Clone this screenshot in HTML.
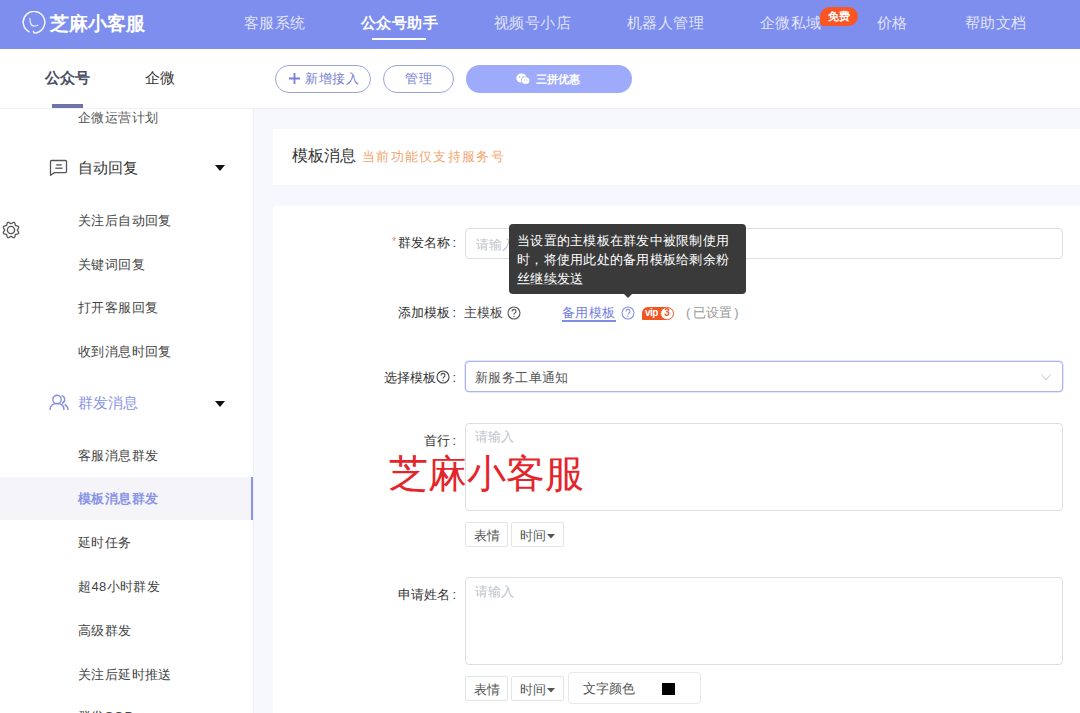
<!DOCTYPE html>
<html><head><meta charset="utf-8">
<style>
*{box-sizing:border-box;margin:0;padding:0}
html,body{width:1080px;height:713px;overflow:hidden;background:#f7f8fd;font-family:"Liberation Sans",sans-serif;color:#333}
.abs{position:absolute;white-space:nowrap}
#hdr{position:absolute;left:0;top:0;width:1080px;height:49px;background:#7e8eee}
.nav{position:absolute;top:14px;font-size:15px;line-height:18px;color:rgba(255,255,255,.78);letter-spacing:.4px}
#sub{position:absolute;left:0;top:49px;width:1080px;height:60px;background:#fff;border-bottom:1px solid #efeff5}
#side{position:absolute;left:0;top:109px;width:253px;height:604px;background:#fff}
.si{position:absolute;left:78px;font-size:13px;line-height:16px;color:#444;letter-spacing:.4px}
.sg{position:absolute;left:78px;font-size:15px;line-height:18px;color:#333}
.card{position:absolute;background:#fff}
.lbl{position:absolute;font-size:13px;line-height:16px;color:#333;text-align:right;right:624px;white-space:nowrap}
.c{font-style:normal;margin-left:2px}
.inp{position:absolute;left:465px;width:598px;border:1px solid #dedede;border-radius:4px;background:#fff}
.ph{position:absolute;font-size:13px;line-height:16px;color:#c0c4cc}
.btn{position:absolute;height:25px;border:1px solid #e4e4e4;border-radius:2px;background:#fff;font-size:13px;line-height:25px;color:#555;text-align:center}
</style></head><body>
<div id="hdr">
  <svg class="abs" style="left:22px;top:11px" width="24" height="24" viewBox="0 0 24 24"><path d="M7.5 21 A10.8 10.8 0 1 1 12.1 22 L11.2 19.8" fill="none" stroke="#fff" stroke-width="1.5" stroke-linejoin="round" opacity=".9"/><path d="M7.9 7 C7.9 12 9 15 12 15 C14 15 15.5 14.6 16.4 14" fill="none" stroke="#fff" stroke-width="1.4" opacity=".75"/></svg>
  <div class="abs" style="left:50px;top:13px;font-size:19px;line-height:22px;font-weight:bold;color:#fff">芝麻小客服</div>
  <div class="nav" style="left:244px">客服系统</div>
  <div class="nav" style="left:361px;font-weight:bold;color:#fff;font-size:15.2px">公众号助手</div>
  <div class="abs" style="left:372px;top:38px;width:54px;height:2px;background:#fff"></div>
  <div class="nav" style="left:494px">视频号小店</div>
  <div class="nav" style="left:627px">机器人管理</div>
  <div class="nav" style="left:760px">企微私域</div>
  <div class="abs" style="left:820px;top:7px;width:38px;height:19px;background:#fa5522;border-radius:9.5px 9.5px 9.5px 4px;color:#fff;font-size:11px;line-height:19px;text-align:center;font-weight:bold">免费</div>
  <div class="nav" style="left:877px">价格</div>
  <div class="nav" style="left:965px">帮助文档</div>
</div>
<div id="sub">
  <div class="abs" style="left:45px;top:20px;font-size:15px;line-height:18px;font-weight:bold;color:#4a4e66">公众号</div>
  <div class="abs" style="left:145px;top:20px;font-size:15px;line-height:18px;color:#333">企微</div>
  <div class="abs" style="left:52px;top:55px;width:31px;height:4px;background:#6e74a8"></div>
  <div class="abs" style="left:275px;top:16px;width:96px;height:28px;border:1px solid #9aa2e2;border-radius:14px;color:#7880d4;font-size:13px;line-height:26px;padding-left:13px;letter-spacing:.6px">
    <svg width="11" height="11" viewBox="0 0 11 11" style="vertical-align:-1px;margin-right:5px"><path d="M5.5 0 V11 M0 5.5 H11" stroke="#7880d4" stroke-width="1.8"/></svg>新增接入</div>
  <div class="abs" style="left:383px;top:16px;width:71px;height:28px;border:1px solid #9aa2e2;border-radius:14px;color:#7880d4;font-size:13px;line-height:26px;text-align:center;letter-spacing:.5px">管理</div>
  <div class="abs" style="left:466px;top:16px;width:166px;height:28px;background:#9eabfa;border-radius:14px;color:#fff;font-size:11px;line-height:28px;padding-left:50px">
    <svg width="14" height="12" viewBox="0 0 14 12" style="vertical-align:-2px"><ellipse cx="5.5" cy="5" rx="5.2" ry="4.5" fill="#fff"/><circle cx="3.6" cy="4" r=".7" fill="#9eabfa"/><circle cx="7" cy="4" r=".7" fill="#9eabfa"/><ellipse cx="9.6" cy="7.6" rx="4.2" ry="3.7" fill="#fff" stroke="#9eabfa" stroke-width=".7"/><circle cx="8.3" cy="7" r=".55" fill="#9eabfa"/><circle cx="11" cy="7" r=".55" fill="#9eabfa"/></svg>&nbsp;&nbsp;<b>三拼优惠</b></div>
</div>

<div id="side">
  <div class="si" style="top:1px;color:#555">企微运营计划</div>
  <svg class="abs" style="left:49px;top:50px" width="20" height="18" viewBox="0 0 20 18"><path d="M2.5 1.5 H16.5 Q17.5 1.5 17.5 2.5 V12.5 Q17.5 13.6 16.5 13.6 H5.5 L1.5 16.3 V2.5 Q1.5 1.5 2.5 1.5 Z" fill="none" stroke="#555" stroke-width="1.3" stroke-linejoin="round"/><path d="M7.2 5.9 H12.7" stroke="#666" stroke-width="1.5"/><path d="M6.3 9.2 H13.5" stroke="#444" stroke-width="1.2"/></svg>
  <div class="sg" style="top:50px">自动回复</div>
  <svg class="abs" style="left:215px;top:56px" width="10" height="6" viewBox="0 0 10 6"><path d="M0 0 H10 L5 6 Z" fill="#111"/></svg>
  <div class="si" style="top:104px">关注后自动回复</div>
  <div class="si" style="top:148px">关键词回复</div>
  <div class="si" style="top:191px">打开客服回复</div>
  <div class="si" style="top:235px">收到消息时回复</div>
  <svg class="abs" style="left:49px;top:285px" width="20" height="17" viewBox="0 0 20 17"><circle cx="8" cy="5.5" r="4.2" fill="none" stroke="#858ee0" stroke-width="1.4"/><path d="M1 16 C1 11.5 4 9.5 8 9.5 C12 9.5 15 11.5 15 16" fill="none" stroke="#858ee0" stroke-width="1.4"/><path d="M12.5 1.6 A4 4 0 0 1 13 9.3 M15.5 10.5 C17.8 11.5 19 13.3 19 16" fill="none" stroke="#858ee0" stroke-width="1.4"/></svg>
  <div class="sg" style="top:285px;color:#8a94e6">群发消息</div>
  <svg class="abs" style="left:215px;top:292px" width="10" height="6" viewBox="0 0 10 6"><path d="M0 0 H10 L5 6 Z" fill="#111"/></svg>
  <div class="si" style="top:339px">客服消息群发</div>
  <div class="abs" style="left:0;top:368px;width:253px;height:43px;background:#f4f4f9;border-right:2px solid #8a94e6"></div>
  <div class="si" style="top:382px;color:#8a94e6;font-weight:bold">模板消息群发</div>
  <div class="si" style="top:426px">延时任务</div>
  <div class="si" style="top:470px">超48小时群发</div>
  <div class="si" style="top:514px">高级群发</div>
  <div class="si" style="top:558px">关注后延时推送</div>
  <div class="si" style="top:600px">群发SOP</div>
</div>
<svg class="abs" style="left:2px;top:221px" width="18" height="18" viewBox="0 0 18 18"><path d="M15.35 9.00 L15.46 9.42 L15.77 9.89 L16.16 10.42 L16.51 11.01 L16.69 11.61 L16.62 12.16 L16.29 12.59 L15.73 12.89 L15.07 13.06 L14.41 13.15 L13.87 13.27 L13.49 13.49 L13.27 13.87 L13.15 14.41 L13.06 15.07 L12.89 15.73 L12.59 16.29 L12.16 16.62 L11.61 16.69 L11.01 16.51 L10.42 16.16 L9.89 15.77 L9.42 15.46 L9.00 15.35 L8.58 15.46 L8.11 15.77 L7.58 16.16 L6.99 16.51 L6.39 16.69 L5.84 16.62 L5.41 16.29 L5.11 15.73 L4.94 15.07 L4.85 14.41 L4.73 13.87 L4.51 13.49 L4.13 13.27 L3.59 13.15 L2.93 13.06 L2.27 12.89 L1.71 12.59 L1.38 12.16 L1.31 11.61 L1.49 11.01 L1.84 10.42 L2.23 9.89 L2.54 9.42 L2.65 9.00 L2.54 8.58 L2.23 8.11 L1.84 7.58 L1.49 6.99 L1.31 6.39 L1.38 5.84 L1.71 5.41 L2.27 5.11 L2.93 4.94 L3.59 4.85 L4.13 4.73 L4.51 4.51 L4.73 4.13 L4.85 3.59 L4.94 2.93 L5.11 2.27 L5.41 1.71 L5.84 1.38 L6.39 1.31 L6.99 1.49 L7.58 1.84 L8.11 2.23 L8.58 2.54 L9.00 2.65 L9.42 2.54 L9.89 2.23 L10.42 1.84 L11.01 1.49 L11.61 1.31 L12.16 1.38 L12.59 1.71 L12.89 2.27 L13.06 2.93 L13.15 3.59 L13.27 4.13 L13.49 4.51 L13.87 4.73 L14.41 4.85 L15.07 4.94 L15.73 5.11 L16.29 5.41 L16.62 5.84 L16.69 6.39 L16.51 6.99 L16.16 7.58 L15.77 8.11 L15.46 8.58Z" fill="none" stroke="#555" stroke-width="1.3" stroke-linejoin="round"/><circle cx="9" cy="9" r="3.6" fill="none" stroke="#555" stroke-width="1.4"/></svg>

<div class="abs" style="left:253px;top:109px;width:1px;height:604px;background:#f0f0f6"></div>
<div class="card" style="left:273px;top:129px;width:807px;height:56px"></div>
<div class="abs" style="left:292px;top:147px;font-size:16px;line-height:18px;color:#333">模板消息</div><div class="abs" style="left:362px;top:148px;font-size:12.6px;line-height:18px;letter-spacing:1.3px;color:#f2a670">当前功能仅支持服务号</div>
<div class="card" style="left:273px;top:206px;width:807px;height:507px"></div>

<div class="abs" style="left:392px;top:235px;font-size:11px;color:#f08a8a">*</div>
<div class="lbl" style="top:235px">群发名称<i class="c">:</i></div>
<div class="inp" style="top:228px;height:31px"></div>
<div class="ph" style="left:476px;top:237px">请输入</div>

<div class="lbl" style="top:305px">添加模板<i class="c">:</i></div>
<div class="abs" style="left:464px;top:305px;font-size:13px;line-height:16px;color:#444">主模板</div>
<svg class="abs" style="left:507px;top:306px" width="14" height="14" viewBox="0 0 14 14"><circle cx="7" cy="7" r="6" fill="none" stroke="#555" stroke-width="1.1"/><path d="M5 5.4 A2 2 0 1 1 7.6 7.3 C7 7.6 7 8 7 8.6" fill="none" stroke="#555" stroke-width="1.1"/><circle cx="7" cy="10.4" r=".7" fill="#555"/></svg>
<div class="abs" style="left:562px;top:305px;font-size:13px;line-height:16px;color:#6f7de0;border-bottom:2px solid #7f8ce6;padding-bottom:0;line-height:15px;letter-spacing:.4px">备用模板</div>
<svg class="abs" style="left:621px;top:306px" width="14" height="14" viewBox="0 0 14 14"><circle cx="7" cy="7" r="6" fill="none" stroke="#8a94e6" stroke-width="1.1"/><path d="M5 5.4 A2 2 0 1 1 7.6 7.3 C7 7.6 7 8 7 8.6" fill="none" stroke="#8a94e6" stroke-width="1.1"/><circle cx="7" cy="10.4" r=".7" fill="#8a94e6"/></svg>
<div class="abs" style="left:642px;top:307px;width:24px;height:13px;background:#f25522;border-radius:6px 0 0 1px;color:#fff;font-size:10px;line-height:12px;font-weight:bold;padding-left:3px;letter-spacing:-.6px">vip</div>
<div class="abs" style="left:660px;top:307px;width:14px;height:13px;background:#fff;border:1.5px solid #f25522;border-radius:7px;color:#f25522;font-size:10px;line-height:10px;text-align:center;font-weight:bold">3</div>
<div class="abs" style="left:686px;top:305px;font-size:13px;line-height:16px;color:#999">(<span style="margin:0 2px 0 3px">已设置</span>)</div>

<div class="lbl" style="top:370px">选择模板<svg width="14" height="14" viewBox="0 0 14 14" style="vertical-align:-2px"><circle cx="7" cy="7" r="6" fill="none" stroke="#444" stroke-width="1.1"/><path d="M5 5.4 A2 2 0 1 1 7.6 7.3 C7 7.6 7 8 7 8.6" fill="none" stroke="#444" stroke-width="1.1"/><circle cx="7" cy="10.4" r=".7" fill="#444"/></svg><i class="c">:</i></div>
<div class="inp" style="top:361px;height:31px;border-color:#aab3f3;box-shadow:0 0 0 .5px rgba(180,188,245,.7)"></div>
<div class="abs" style="left:475px;top:370px;font-size:13px;line-height:16px;color:#555;letter-spacing:.4px">新服务工单通知</div>
<svg class="abs" style="left:1041px;top:374px" width="10" height="7" viewBox="0 0 10 7"><path d="M.5 .5 L5 6 L9.5 .5" fill="none" stroke="#c0c4cc" stroke-width="1"/></svg>

<div class="lbl" style="top:433px">首行<i class="c">:</i></div>
<div class="inp" style="top:423px;height:88px"></div>
<div class="ph" style="left:475px;top:429px">请输入</div>
<div class="abs" style="left:389px;top:452px;font-size:39px;line-height:44px;color:#e3262c">芝麻小客服</div>
<div class="btn" style="left:465px;top:522px;width:43px">表情</div>
<div class="btn" style="left:511px;top:522px;width:53px">时间<svg width="8" height="5" viewBox="0 0 8 5" style="vertical-align:1px;margin-left:1px"><path d="M0 0 H8 L4 4.5Z" fill="#555"/></svg></div>

<div class="lbl" style="top:587px">申请姓名<i class="c">:</i></div>
<div class="inp" style="top:577px;height:88px"></div>
<div class="ph" style="left:475px;top:584px">请输入</div>
<div class="btn" style="left:465px;top:676px;width:43px">表情</div>
<div class="btn" style="left:511px;top:676px;width:53px">时间<svg width="8" height="5" viewBox="0 0 8 5" style="vertical-align:1px;margin-left:1px"><path d="M0 0 H8 L4 4.5Z" fill="#555"/></svg></div>
<div class="abs" style="left:568px;top:672px;width:133px;height:32px;border:1px solid #e8e8e8;border-radius:4px;background:#fff;font-size:13px;line-height:32px;color:#555;padding-left:14px">文字颜色<span style="position:absolute;left:93px;top:10px;width:13px;height:12px;background:#000"></span></div>

<div class="abs" style="left:509px;top:224px;width:237px;height:70px;background:#3a3a3a;border-radius:4px;color:#fff;font-size:13px;line-height:19px;padding:7px 8px 0;letter-spacing:.25px">当设置的主模板在群发中被限制使用<br>时，将使用此处的备用模板给剩余粉<br><span style="text-decoration:underline;text-decoration-color:rgba(255,255,255,.22)">丝继续发送</span></div>
<div class="abs" style="left:623px;top:293px;width:0;height:0;border-left:5px solid transparent;border-right:5px solid transparent;border-top:5px solid #3a3a3a"></div>

</body></html>
